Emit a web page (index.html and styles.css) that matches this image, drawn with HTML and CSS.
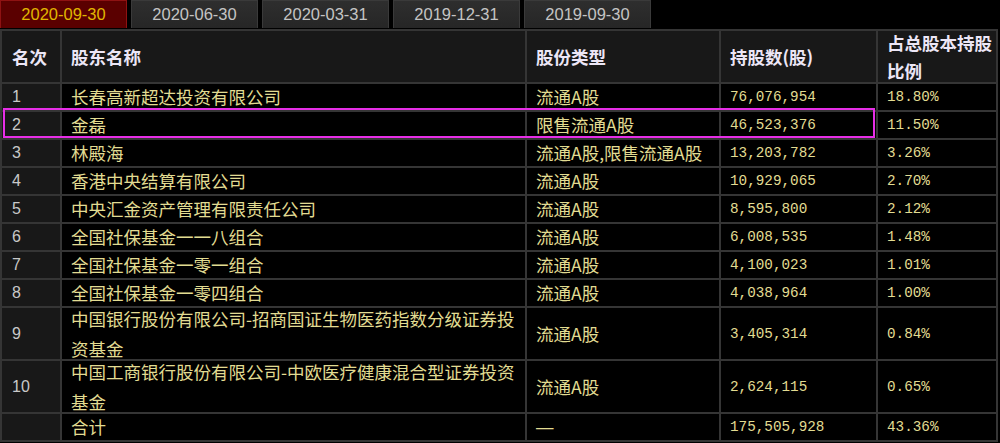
FILE: index.html
```html
<!DOCTYPE html>
<html lang="zh-CN">
<head>
<meta charset="utf-8">
<title>十大股东</title>
<link rel="stylesheet" href="styles.css">
</head>
<body>
<div class="page">
  <div class="tabs">
    <div class="tab active">2020-09-30</div>
    <div class="tab">2020-06-30</div>
    <div class="tab">2020-03-31</div>
    <div class="tab">2019-12-31</div>
    <div class="tab">2019-09-30</div>
  </div>
  <div class="grid">
    <div class="th rank">名次</div>
    <div class="th">股东名称</div>
    <div class="th">股份类型</div>
    <div class="th">持股数(股)</div>
    <div class="th two">占总股本持股<br>比例</div>

    <div class="rank">1</div><div class="cell">长春高新超达投资有限公司</div><div class="cell">流通A股</div><div class="cell num">76,076,954</div><div class="cell num">18.80%</div>
    <div class="rank">2</div><div class="cell">金磊</div><div class="cell">限售流通A股</div><div class="cell num">46,523,376</div><div class="cell num">11.50%</div>
    <div class="rank">3</div><div class="cell">林殿海</div><div class="cell">流通A股,限售流通A股</div><div class="cell num">13,203,782</div><div class="cell num">3.26%</div>
    <div class="rank">4</div><div class="cell">香港中央结算有限公司</div><div class="cell">流通A股</div><div class="cell num">10,929,065</div><div class="cell num">2.70%</div>
    <div class="rank">5</div><div class="cell">中央汇金资产管理有限责任公司</div><div class="cell">流通A股</div><div class="cell num">8,595,800</div><div class="cell num">2.12%</div>
    <div class="rank">6</div><div class="cell">全国社保基金一一八组合</div><div class="cell">流通A股</div><div class="cell num">6,008,535</div><div class="cell num">1.48%</div>
    <div class="rank">7</div><div class="cell">全国社保基金一零一组合</div><div class="cell">流通A股</div><div class="cell num">4,100,023</div><div class="cell num">1.01%</div>
    <div class="rank">8</div><div class="cell">全国社保基金一零四组合</div><div class="cell">流通A股</div><div class="cell num">4,038,964</div><div class="cell num">1.00%</div>
    <div class="rank">9</div><div class="cell wrap">中国银行股份有限公司-招商国证生物医药指数分级证券投<br>资基金</div><div class="cell">流通A股</div><div class="cell num">3,405,314</div><div class="cell num">0.84%</div>
    <div class="rank">10</div><div class="cell wrap">中国工商银行股份有限公司-中欧医疗健康混合型证券投资<br>基金</div><div class="cell">流通A股</div><div class="cell num">2,624,115</div><div class="cell num">0.65%</div>
    <div class="rank"></div><div class="cell">合计</div><div class="cell dash">—</div><div class="cell num">175,505,928</div><div class="cell num">43.36%</div>
  </div>
  <div class="highlight"></div>
</div>
</body>
</html>
```

FILE: styles.css
```css
html, body {
  margin: 0;
  padding: 0;
  background: #000;
}
body {
  width: 1000px;
  height: 443px;
  overflow: hidden;
  font-family: "Noto Sans CJK SC", "Noto Sans", sans-serif;
}
.page {
  position: relative;
}
.tabs {
  display: flex;
  gap: 4px;
  height: 28px;
}
.tab {
  width: 127px;
  box-sizing: border-box;
  height: 28px;
  display: flex;
  align-items: center;
  justify-content: center;
  background: linear-gradient(#2e2e2e, #262626);
  border: 1px solid #3a3a3a;
  border-bottom: none;
  color: #c4c4c4;
  font-family: "Liberation Sans", Arial, sans-serif;
  font-size: 16.5px;
}
.tab.active {
  background: #5a0000;
  border-color: #8e1212;
  color: #e0b600;
}
.grid {
  margin-top: 1px;
  display: grid;
  width: 998px;
  box-sizing: border-box;
  grid-template-columns: 58px 463px 192px 155px 118px;
  grid-template-rows: 51px repeat(8, 26px) 51px 51px 26px;
  gap: 2px;
  padding: 2px;
  background: #353535;
}
.grid > div {
  display: flex;
  align-items: center;
  padding-left: 9px;
  white-space: nowrap;
  min-width: 0;
}
.th {
  background: #181818;
  color: #ece6f6;
  font-weight: 700;
  font-size: 17.5px;
}
.th.two {
  line-height: 28px;
}
.rank {
  background: #181818;
  color: #c8c8c8;
  font-family: "Liberation Sans", Arial, sans-serif;
  font-size: 16px;
}
.grid > .rank {
  padding-left: 10px;
}
.th.rank {
  font-family: "Noto Sans CJK SC", sans-serif;
  font-size: 17.5px;
  color: #ece6f6;
}
.cell {
  background: #000;
  color: #e2dc92;
  font-size: 17.5px;
  line-height: 26px;
}
.cell.wrap {
  line-height: 30px;
}
.cell.num {
  font-family: "Liberation Mono", "Courier New", monospace;
  font-size: 14.3px;
}
.cell.dash {
  font-family: "Liberation Sans", Arial, sans-serif;
}
.highlight {
  position: absolute;
  left: 3px;
  top: 108px;
  width: 872px;
  height: 30px;
  box-sizing: border-box;
  border: 2px solid #e62ee6;
}
```
